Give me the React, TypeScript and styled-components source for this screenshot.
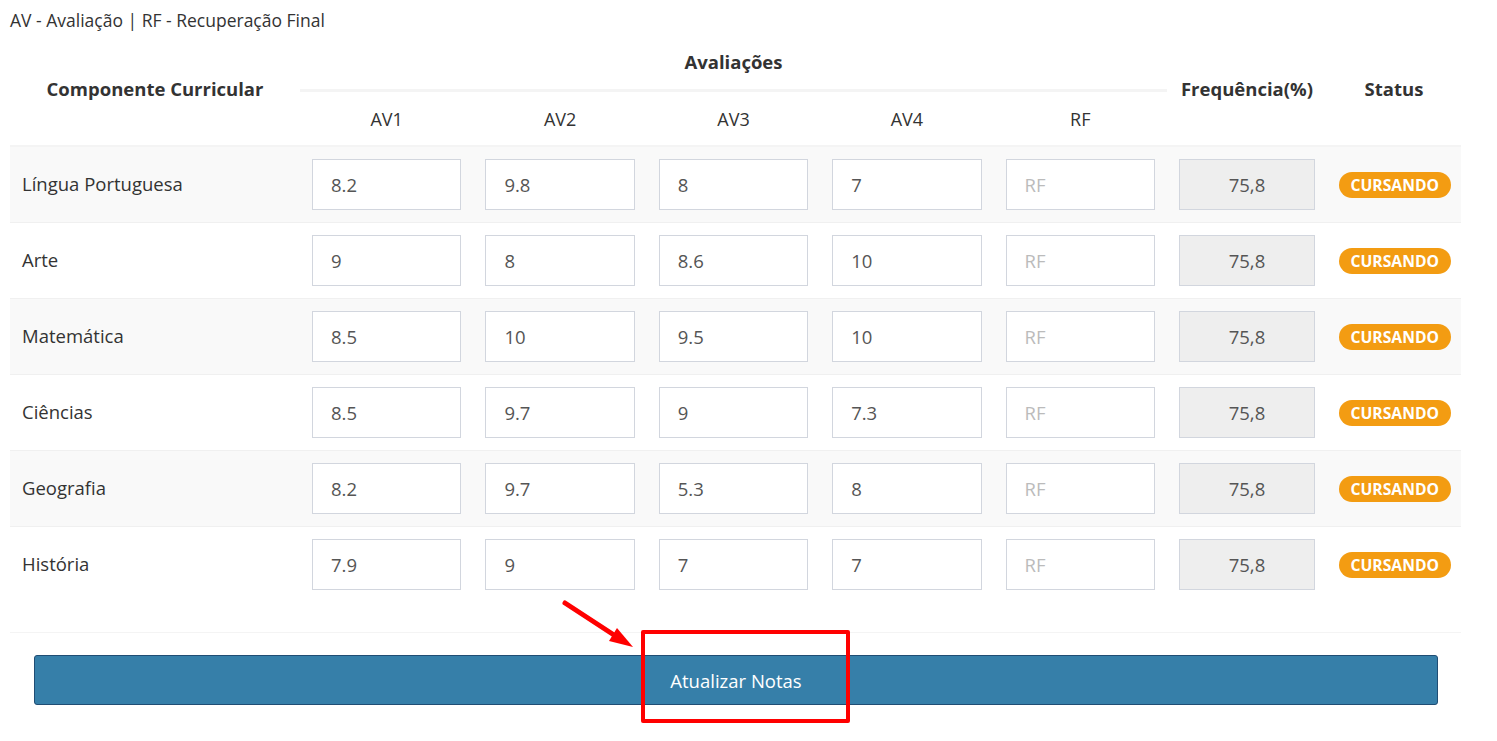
import React from 'react';
import styled, { createGlobalStyle } from 'styled-components';

const GlobalStyle = createGlobalStyle`
  html, body {
    margin: 0;
    padding: 0;
    background: #fff;
  }
  body {
    font-family: "Source Sans Pro", "Open Sans", "Noto Sans", sans-serif;
    color: #333;
  }
  * {
    box-sizing: border-box;
  }
`;

const Page = styled.div`
  position: relative;
  padding: 10px;
  width: 1471px;
  min-height: 741px;
`;

const Legend = styled.p`
  margin: 0 0 10px;
  font-size: 17.5px;
  line-height: 20px;
  color: #333;
`;

const Table = styled.table`
  width: 1451px;
  border-collapse: collapse;
  table-layout: fixed;
`;

const HeadCell = styled.th<{ $bold?: boolean; $split?: boolean; $sub?: boolean }>`
  font-size: ${({ $sub }) => ($sub ? '18px' : '18.5px')};
  font-weight: ${({ $bold }) => ($bold ? 700 : 400)};
  color: #333;
  text-align: center;
  vertical-align: middle;
  white-space: nowrap;
  padding: ${({ $split, $sub }) => ($sub ? '2px 4px 0' : $split ? '0 4px 8px' : '0 4px 6px')};
  border-bottom: ${({ $split }) => ($split ? '2px' : '3px')} solid #f4f4f4;
`;

const GroupRow = styled.tr`
  height: 50px;
`;

const SubRow = styled.tr`
  height: 56px;
`;

const Row = styled.tr<{ $striped: boolean }>`
  background: ${({ $striped }) => ($striped ? '#f9f9f9' : '#fff')};
  border-top: 1px solid #f0f0f0;
`;

const Cell = styled.td<{ $center?: boolean }>`
  padding: 12px;
  font-size: 18.5px;
  color: #333;
  vertical-align: middle;
  white-space: nowrap;
  text-align: ${({ $center }) => ($center ? 'center' : 'left')};
`;

const NameCell = styled(Cell)`
  padding-bottom: 14px;
`;

const GradeInput = styled.input<{ $locked?: boolean }>`
  display: block;
  width: 100%;
  height: 51px;
  padding: 0 18px;
  border: 1px solid #d2d6de;
  border-radius: 0;
  font-family: inherit;
  font-size: 18.5px;
  color: #555;
  background: ${({ $locked }) => ($locked ? '#eee' : '#fff')};
  text-align: ${({ $locked }) => ($locked ? 'center' : 'left')};
  outline: none;

  &::placeholder {
    color: #bbb;
  }
`;

const Badge = styled.span`
  display: inline-block;
  padding: 3px 11.5px;
  border-radius: 13px;
  background: #f39c12;
  color: #fff;
  font-size: 15.7px;
  font-weight: 700;
  line-height: 20px;
`;

const Footer = styled.div`
  margin-top: 30px;
  border-top: 1px solid #f4f4f4;
  padding: 22px 23px 0 24px;
`;

const SubmitButton = styled.button`
  display: block;
  width: 100%;
  height: 50px;
  border: 1px solid #204d74;
  border-radius: 3px;
  background: #367fa9;
  color: #fff;
  font-family: inherit;
  font-size: 18.5px;
  cursor: pointer;
`;

const Highlight = styled.div`
  position: absolute;
  left: 641px;
  top: 630px;
  width: 209px;
  height: 93px;
  border: 4px solid #ff0000;
  border-radius: 2px;
  pointer-events: none;
`;

const Arrow = styled.svg`
  position: absolute;
  left: 555px;
  top: 595px;
  pointer-events: none;
`;

const subjects = [
  { name: 'Língua Portuguesa', grades: ['8.2', '9.8', '8', '7'] },
  { name: 'Arte', grades: ['9', '8', '8.6', '10'] },
  { name: 'Matemática', grades: ['8.5', '10', '9.5', '10'] },
  { name: 'Ciências', grades: ['8.5', '9.7', '9', '7.3'] },
  { name: 'Geografia', grades: ['8.2', '9.7', '5.3', '8'] },
  { name: 'História', grades: ['7.9', '9', '7', '7'] },
];

const App: React.FC = () => {
  return (
    <Page>
      <GlobalStyle />
      <Legend>AV - Avaliação | RF - Recuperação Final</Legend>

      <Table>
        <colgroup>
          <col style={{ width: 290 }} />
          <col style={{ width: 173.4 }} />
          <col style={{ width: 173.4 }} />
          <col style={{ width: 173.4 }} />
          <col style={{ width: 173.4 }} />
          <col style={{ width: 173.4 }} />
          <col style={{ width: 160 }} />
          <col style={{ width: 134 }} />
        </colgroup>
        <thead>
          <GroupRow>
            <HeadCell $bold $split rowSpan={2}>Componente Curricular</HeadCell>
            <HeadCell $bold colSpan={5}>Avaliações</HeadCell>
            <HeadCell $bold $split rowSpan={2}>Frequência(%)</HeadCell>
            <HeadCell $bold $split rowSpan={2}>Status</HeadCell>
          </GroupRow>
          <SubRow>
            {['AV1', 'AV2', 'AV3', 'AV4', 'RF'].map((label) => (
              <HeadCell key={label} $split $sub>{label}</HeadCell>
            ))}
          </SubRow>
        </thead>
        <tbody>
          {subjects.map((subject, index) => (
            <Row key={subject.name} $striped={index % 2 === 0}>
              <NameCell>{subject.name}</NameCell>
              {subject.grades.map((grade, i) => (
                <Cell key={i}>
                  <GradeInput defaultValue={grade} />
                </Cell>
              ))}
              <Cell>
                <GradeInput placeholder="RF" />
              </Cell>
              <Cell>
                <GradeInput $locked readOnly defaultValue="75,8" />
              </Cell>
              <Cell $center>
                <Badge>CURSANDO</Badge>
              </Cell>
            </Row>
          ))}
        </tbody>
      </Table>

      <Footer>
        <SubmitButton>Atualizar Notas</SubmitButton>
      </Footer>

      {/* annotation drawn over the screenshot */}
      <Arrow width="90" height="62" viewBox="0 0 90 62">
        <line x1="10" y1="8" x2="59" y2="40" stroke="#ff0000" strokeWidth="5" strokeLinecap="round" />
        <polygon points="78,52 54,46 62,33" fill="#ff0000" />
      </Arrow>
      <Highlight />
    </Page>
  );
};

export default App;
